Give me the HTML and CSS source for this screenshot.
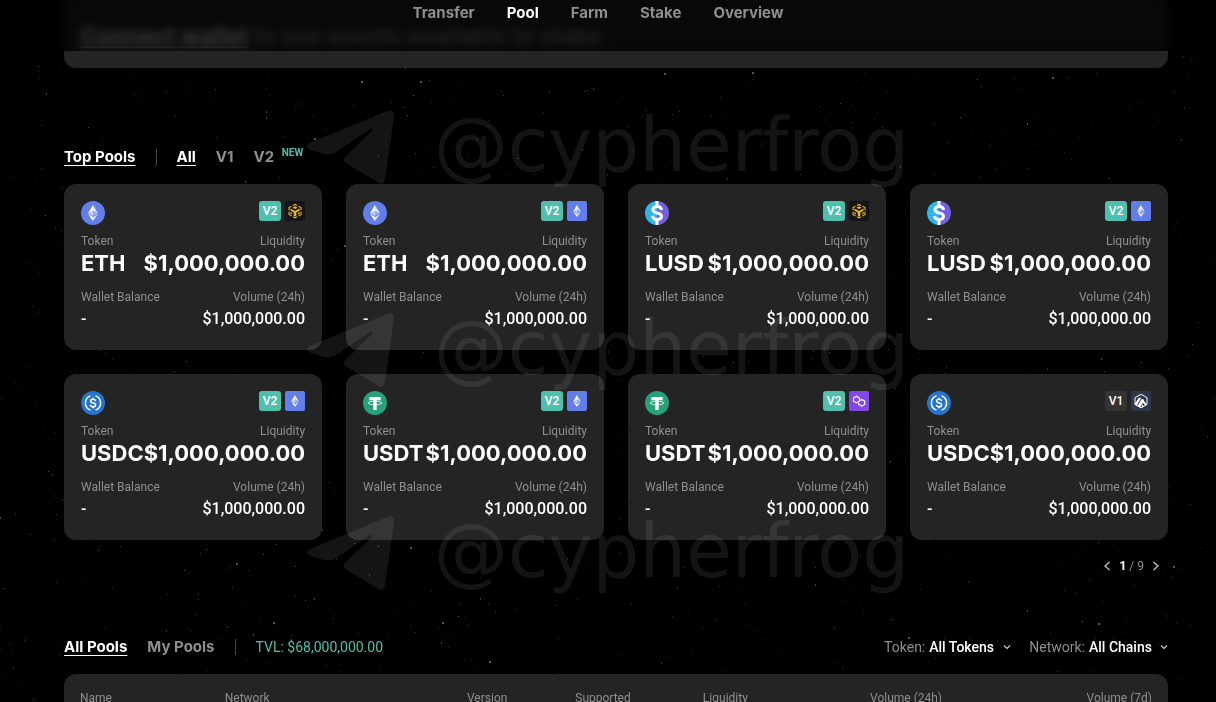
FILE: index.html
```
<!DOCTYPE html>
<html lang="en">
<head>
<meta charset="UTF-8">
<meta name="viewport" content="width=device-width, initial-scale=1.0">
<title>Pool</title>
<link rel="stylesheet" href="styles.css">
</head>
<body>
<svg class="sprite" aria-hidden="true">
  <symbol id="eth" viewBox="0 0 24 24">
    <path fill="#fff" d="M12 4v6l5 2.200z" opacity=".75"/>
    <path fill="#fff" d="M12 4L7 12.200l5-2.200z"/>
    <path fill="#fff" d="M12 16v4l5-7z" opacity=".75"/>
    <path fill="#fff" d="M12 20v-4l-5-3z"/>
    <path fill="#fff" d="M12 15l5-2.800-5-2.200z" opacity=".35"/>
    <path fill="#fff" d="M7 12.200l5 2.800v-5z" opacity=".65"/>
  </symbol>
  <symbol id="token-eth" viewBox="0 0 24 24">
    <circle cx="12" cy="12" r="12" fill="#627eea"/>
    <use href="#eth"/>
  </symbol>
  <symbol id="token-lusd" viewBox="0 0 24 24">
    <path fill="#2eb6ea" d="M12 0a12 12 0 0 0 0 24z"/>
    <path fill="#745ddf" d="M12 0a12 12 0 0 1 0 24z"/>
    <path fill="#fff" d="M10.500 0h3v6h-3zM10.500 18h3v6h-3z"/>
    <path fill="none" stroke="#fff" stroke-width="3" d="M16.500 9.200C16.300 6.800 14.500 5.600 12.200 5.600c-2.500 0-4.200 1.200-4.200 3.100 0 2 1.600 2.700 4.200 3.300 2.700.6 4.300 1.400 4.300 3.300s-1.700 3.100-4.300 3.100c-2.700 0-4.400-1.300-4.600-3.600"/>
  </symbol>
  <symbol id="token-usdc" viewBox="0 0 24 24">
    <circle cx="12" cy="12" r="12" fill="#2775ca"/>
    <path fill="none" stroke="#fff" stroke-width="1.500" d="M9.500 4.900a7.500 7.500 0 0 0 0 14.200M14.500 4.900a7.500 7.500 0 0 1 0 14.200"/>
    <path fill="none" stroke="#fff" stroke-width="1.500" d="M14.500 10.200c-.1-1.300-1.100-1.900-2.500-1.900-1.500 0-2.400.7-2.400 1.800 0 1.200 1 1.600 2.400 1.900 1.500.3 2.600.7 2.600 2 0 1.100-1 1.800-2.600 1.800-1.500 0-2.500-.7-2.600-2M12 6.700v1.800M12 15.500v1.800"/>
  </symbol>
  <symbol id="token-usdt" viewBox="0 0 24 24">
    <circle cx="12" cy="12" r="12" fill="#26a17b"/>
    <path fill="#fff" d="M6.300 6h11.400v3.300h-4v9.700h-3.400V9.300h-4z"/>
    <ellipse cx="12" cy="12" rx="7" ry="1.700" fill="none" stroke="#fff" stroke-width=".8"/>
  </symbol>
  <symbol id="chain-eth" viewBox="0 0 20 20">
    <rect width="20" height="20" rx="2" fill="#627eea"/>
    <use href="#eth" x="1" y="1" width="18" height="18"/>
  </symbol>
  <symbol id="chain-bnb" viewBox="0 0 20 20">
    <rect width="20" height="20" rx="2" fill="#14151a"/>
    <path fill="none" stroke="#f0b90b" stroke-width="1.100" d="M8 4.500l2-1.100 2 1.100M13.500 5.200L16 6.600v2.600M16 10.800v2.700l-2.500 1.400M12 15.700l-2 1.100-2-1.100M6.500 14.900L4 13.500v-2.700M4 9.200V6.600l2.500-1.400"/>
    <path fill="#f0b90b" d="M7.300 6.700L10 5.300l2.700 1.400L10 8.100zM5.400 7.600l4.600 2.500 4.600-2.500v1.900l-3.300 1.900v3.300l-1.300.7-1.300-.7v-3.300L5.400 9.500zM5.400 10.900l1.500.9v1.700l-1.500-.8zM14.600 10.900l-1.500.9v1.700l1.500-.8z"/>
  </symbol>
  <symbol id="chain-polygon" viewBox="0 0 20 20">
    <rect width="20" height="20" rx="2" fill="#8247e5"/>
    <path fill="none" stroke="#fff" stroke-width="1.200" d="M10.500 7.200L7.500 5.200 4.500 7v3.200l3 1.700 5.200-3.400 3 1.700v3.200l-3 1.700-3.100-1.800v-1.600M10.500 7.200v1.800"/>
  </symbol>
  <symbol id="chain-arbitrum" viewBox="0 0 20 20">
    <rect width="20" height="20" rx="2" fill="#2d374b"/>
    <path fill="none" stroke="#fff" stroke-width="1" d="M10 3.300l6 3.400v6.800l-6 3.400-6-3.400V6.700z"/>
    <path fill="#fff" d="M4 12.500L7.800 6.800h2.400L5.700 14.500 4 13.500zM6.500 14.900L10.600 8h1.500l1 1.700-3.800 6.500zM11.800 11.400l1.200-1.300 2.800 3.500-1.600 1z"/>
    <path fill="#fff" d="M10.600 15.800l1-2.400 1.300 2.100-1.900 1.100z"/>
  </symbol>
  <symbol id="plane" viewBox="0 0 87 74">
    <path fill="#fff" d="M3 33L80 1c4-2 8 0 7 5l-9 63c-1 5-4 6-8 3L40 54c-4-2-4-5-1-8l26-25c1-2 0-3-2-2L29 42c-4 3-8 3-12 2L4 40c-5-2-5-5-1-7z"/>
  </symbol>
  <symbol id="chevron-down" viewBox="0 0 8 8">
    <path fill="none" stroke="#ccc" stroke-width="1.200" d="M1 2.500l3 3 3-3"/>
  </symbol>
  <symbol id="chevron-left" viewBox="0 0 8 12">
    <path fill="none" stroke="#ccc" stroke-width="1.200" d="M6.500 2l-4.500 4 4.500 4"/>
  </symbol>
  <symbol id="chevron-right" viewBox="0 0 8 12">
    <path fill="none" stroke="#ccc" stroke-width="1.200" d="M1.500 2l4.500 4-4.500 4"/>
  </symbol>
</svg>

<div class="page">
  <canvas id="stars" class="stars"></canvas>

  <header class="header">
    <nav class="nav">
      <a href="#transfer">Transfer</a>
      <a href="#pool" class="active">Pool</a>
      <a href="#farm">Farm</a>
      <a href="#stake">Stake</a>
      <a href="#overview">Overview</a>
    </nav>
  </header>

  <main class="content">
    <section class="stake-card">
      <p><a href="#connect">Connect wallet</a> to see assets available to stake</p>
    </section>

    <div class="toolbar top-toolbar">
      <h2 class="tab active">Top Pools</h2>
      <span class="divider"></span>
      <button class="tab active">All</button>
      <button class="tab">V1</button>
      <button class="tab">V2 <sup>NEW</sup></button>
    </div>

    <section class="pools" id="pools"></section>

    <div class="pager">
      <button aria-label="Previous page"><svg><use href="#chevron-left"/></svg></button>
      <span class="count"><b>1</b> / 9</span>
      <button aria-label="Next page"><svg><use href="#chevron-right"/></svg></button>
    </div>

    <div class="toolbar all-toolbar">
      <button class="tab active">All Pools</button>
      <button class="tab">My Pools</button>
      <span class="divider"></span>
      <span class="tvl">TVL: $68,000,000.00</span>
      <div class="filters">
        <div class="filter">
          <label for="token">Token:</label>
          <select id="token"><option>All Tokens</option></select>
          <svg><use href="#chevron-down"/></svg>
        </div>
        <div class="filter">
          <label for="network">Network:</label>
          <select id="network"><option>All Chains</option></select>
          <svg><use href="#chevron-down"/></svg>
        </div>
      </div>
    </div>

    <section class="table-card">
      <table>
        <thead>
          <tr>
            <th class="col-name">Name</th>
            <th class="col-network">Network</th>
            <th class="col-version">Version</th>
            <th class="col-supported">Supported</th>
            <th class="col-liquidity">Liquidity</th>
            <th>Volume (24h)</th>
            <th class="col-last">Volume (7d)</th>
          </tr>
        </thead>
      </table>
    </section>
  </main>

  <div class="watermark" aria-hidden="true">
    <div class="mark"><svg><use href="#plane"/></svg><span>@cypherfrog</span></div>
    <div class="mark"><svg><use href="#plane"/></svg><span>@cypherfrog</span></div>
    <div class="mark"><svg><use href="#plane"/></svg><span>@cypherfrog</span></div>
  </div>
</div>

<script src="script.js"></script>
</body>
</html>
```
FILE: styles.css
```
* { box-sizing: border-box; }
body { margin: 0; background: #000; color: #fff; font-family: Roboto, sans-serif; font-size: 12px; }
a { color: inherit; text-decoration: none; }
button { background: none; border: none; padding: 0; color: inherit; font: inherit; cursor: pointer; }
h2, p { margin: 0; }

.sprite { display: none; }
.page { position: relative; height: 100vh; overflow: hidden; }
.stars { position: absolute; inset: 0; width: 100%; height: 100%; }

/* header */
.header { position: fixed; top: 0; left: 0; right: 0; z-index: 2; height: 51px; padding: 4px 20px 0 0; background: rgba(0, 0, 0, 0.78); backdrop-filter: blur(4px); }
.nav { display: flex; justify-content: center; gap: 32px; font: 700 15px/18px Inter, sans-serif; color: #8f8f8f; }
.nav a:hover, .nav .active { color: #fff; }

.content { position: relative; padding: 0 48px 0 64px; }
.stake-card { height: 68px; padding: 22px 16px 0; background: #242424; border-radius: 0 0 12px 12px; font: 700 23px/28px Inter, sans-serif; color: #8f8f8f; }
.stake-card a { color: #fff; text-decoration: underline; }

/* tabs */
.toolbar { display: flex; align-items: center; gap: 20px; height: 24px; margin-bottom: 15px; }
.top-toolbar { margin-top: 77px; }
.all-toolbar { margin-top: 61px; }
.tab { font: 700 15px/24px Inter, sans-serif; color: #8f8f8f; white-space: nowrap; }
.tab.active { color: #fff; text-decoration: underline; text-decoration-thickness: 1px; text-underline-offset: 3px; }
.tab sup { margin-left: 4px; font: 700 10px/10px Roboto, sans-serif; color: #4fbfae; }
.divider { width: 1px; height: 16px; background: #444; }
.tvl { font-size: 14px; color: #4fbfae; }

/* pool cards */
.pools { display: grid; grid-template-columns: repeat(4, minmax(0, 1fr)); gap: 24px; }
.pool { height: 166px; padding: 17px; background: #242424; border-radius: 12px; }
.pool-head, .pool-row { display: flex; justify-content: space-between; }
.pool-head { height: 32px; }
.token-icon { width: 24px; height: 24px; }
.badges { display: flex; gap: 4px; }
.badges svg { width: 20px; height: 20px; }
.version { width: 22px; height: 20px; border-radius: 3px; background: #4fbfae; font-weight: 500; line-height: 20px; text-align: center; }
.version.v1 { background: #333; }
.pool-row > div:last-child { text-align: right; }
.pool-row + .pool-row { margin-top: 12px; }
.label { color: #8f8f8f; line-height: 16px; }
.big { font: 700 22px/28px Inter, sans-serif; white-space: nowrap; }
.small { font-size: 16px; font-weight: 500; line-height: 28px; }

.pager { display: flex; justify-content: flex-end; align-items: center; gap: 8px; height: 16px; margin-top: 18px; padding-right: 8px; color: #8f8f8f; }
.pager button { height: 12px; }
.pager svg { display: block; width: 8px; height: 12px; }
.pager b { color: #fff; }

/* filters */
.filters { display: flex; gap: 18px; margin-left: auto; font-size: 14px; }
.filter { display: flex; align-items: center; gap: 4px; }
.filter label { color: #8f8f8f; }
.filter select { appearance: none; padding: 0; border: none; background: none; color: #fff; font: 500 14px/20px Roboto, sans-serif; }
.filter svg { width: 8px; height: 8px; margin-left: 4px; }

/* table */
.table-card { padding: 16px; background: #242424; border-radius: 12px; }
table { width: 100%; table-layout: fixed; border-collapse: collapse; }
th { padding: 0; color: #8f8f8f; font-weight: 400; line-height: 16px; text-align: left; white-space: nowrap; }
.col-name { width: 13.5%; }
.col-network { width: 22.6%; }
.col-version { width: 10.1%; }
.col-supported { width: 11.9%; }
.col-liquidity { width: 15.6%; }
.col-last { text-align: right; }

/* watermark over the whole page */
.watermark { position: absolute; inset: 0; padding-top: 97px; display: flex; flex-direction: column; gap: 103px; opacity: 0.08; pointer-events: none; }
.mark { display: flex; justify-content: center; align-items: center; gap: 40px; height: 100px; font: 74px/96px "DejaVu Sans", sans-serif; }
.mark span { padding-bottom: 4px; }
.mark svg { width: 87px; height: 74px; }
```
FILE: script.js
```
const pools = [
  { token: 'ETH', version: 'V2', chain: 'bnb' },
  { token: 'ETH', version: 'V2', chain: 'eth' },
  { token: 'LUSD', version: 'V2', chain: 'bnb' },
  { token: 'LUSD', version: 'V2', chain: 'eth' },
  { token: 'USDC', version: 'V2', chain: 'eth' },
  { token: 'USDT', version: 'V2', chain: 'eth' },
  { token: 'USDT', version: 'V2', chain: 'polygon' },
  { token: 'USDC', version: 'V1', chain: 'arbitrum' }
];

document.getElementById('pools').innerHTML = pools.map(pool => `
  <article class="pool">
    <div class="pool-head">
      <svg class="token-icon"><use href="#token-${pool.token.toLowerCase()}"/></svg>
      <div class="badges">
        <span class="version ${pool.version.toLowerCase()}">${pool.version}</span>
        <svg><use href="#chain-${pool.chain}"/></svg>
      </div>
    </div>
    <div class="pool-row">
      <div><div class="label">Token</div><div class="big">${pool.token}</div></div>
      <div><div class="label">Liquidity</div><div class="big">$1,000,000.00</div></div>
    </div>
    <div class="pool-row">
      <div><div class="label">Wallet Balance</div><div class="small">-</div></div>
      <div><div class="label">Volume (24h)</div><div class="small">$1,000,000.00</div></div>
    </div>
  </article>`).join('');

// Star field, same sky on every load
function drawStars() {
  const canvas = document.getElementById('stars');
  canvas.width = canvas.clientWidth;
  canvas.height = canvas.clientHeight;
  const ctx = canvas.getContext('2d');
  let seed = 7;
  const random = () => {
    seed = (seed * 16807) % 2147483647;
    return seed / 2147483647;
  };
  const count = canvas.width * canvas.height / 400;
  for (let i = 0; i < count; i++) {
    const light = Math.round(18 + Math.pow(random(), 5) * 70);
    ctx.fillStyle = `rgb(${light}, ${light}, ${light})`;
    ctx.fillRect(Math.floor(random() * canvas.width), Math.floor(random() * canvas.height), 1, random() > 0.8 ? 2 : 1);
  }
  // the brighter ones
  const bright = [[361, 81], [420, 81], [664, 73], [752, 72], [1052, 77], [314, 138], [344, 245], [273, 622], [442, 622], [489, 661], [908, 637], [410, 547], [236, 563], [1098, 623], [1173, 566]];
  ctx.fillStyle = '#555';
  bright.forEach(([x, y]) => ctx.fillRect(x, y, 2, 2));
}

drawStars();
window.addEventListener('resize', drawStars);
```
